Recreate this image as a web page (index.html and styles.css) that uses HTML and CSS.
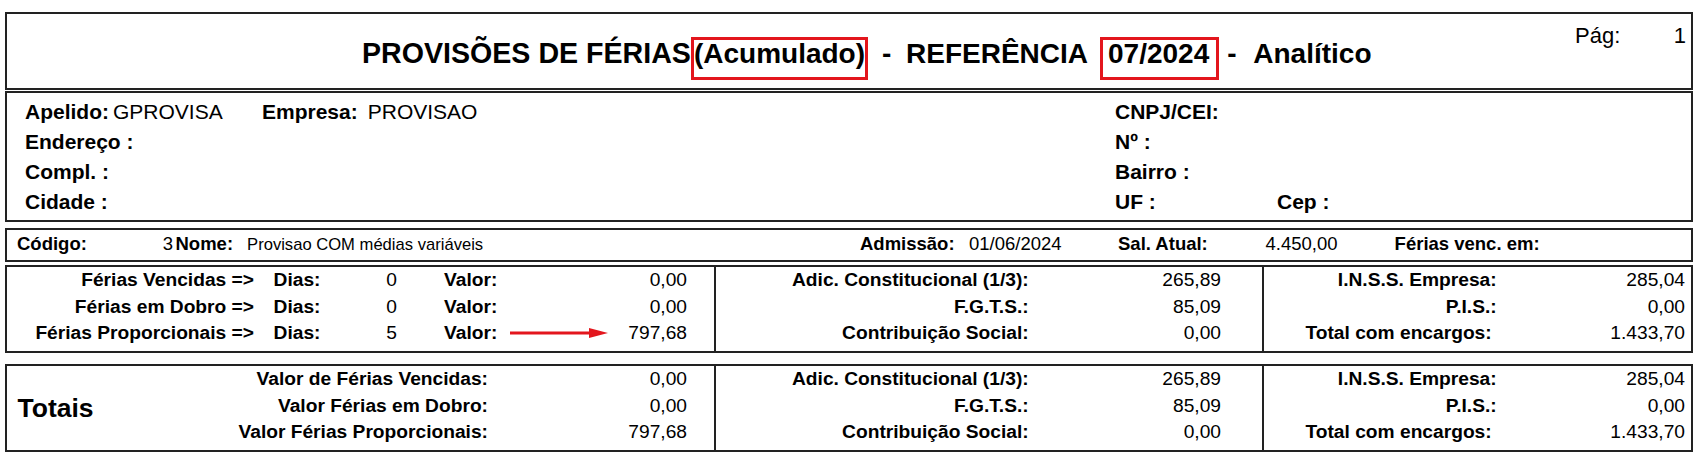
FILE: index.html
```html
<!DOCTYPE html>
<html lang="pt-BR">
<head>
<meta charset="utf-8">
<title>Provisões de Férias</title>
<link rel="stylesheet" href="styles.css">
</head>
<body>
<div class="page">
  <header class="box head">
    <h1 class="title">
      <span class="t-main">PROVISÕES DE FÉRIAS</span>
      <span class="mark mark-acum">(Acumulado)</span>
      <span class="dash dash-1">-</span>
      <span class="t-ref">REFERÊNCIA</span>
      <span class="mark mark-ref">07/2024</span>
      <span class="dash dash-2">-</span>
      <span class="t-kind">Analítico</span>
    </h1>
    <div class="pag"><span>Pág:</span><span>1</span></div>
  </header>

  <section class="box info">
    <div class="info-col">
      <div class="row"><span class="f-apelido"><span class="lb">Apelido:</span><span class="v-apelido">GPROVISA</span></span><span class="lb">Empresa:</span><span class="v-empresa">PROVISAO</span></div>
      <div class="row"><span class="lb">Endereço :</span></div>
      <div class="row"><span class="lb">Compl. :</span></div>
      <div class="row"><span class="lb">Cidade :</span></div>
    </div>
    <div class="info-col">
      <div class="row"><span class="lb">CNPJ/CEI:</span></div>
      <div class="row"><span class="lb">Nº :</span></div>
      <div class="row"><span class="lb">Bairro :</span></div>
      <div class="row"><span class="lb uf">UF :</span><span class="lb">Cep :</span></div>
    </div>
  </section>

  <section class="box emp">
    <div class="c-cod"><span class="lb">Código:</span><span>3</span></div>
    <div class="c-nome"><span class="lb">Nome:</span><span class="v-nome">Provisao COM médias variáveis</span></div>
    <div class="c-adm"><span class="lb">Admissão:</span><span class="v-adm">01/06/2024</span></div>
    <div class="c-sal"><span class="lb w-sal">Sal. Atual:</span><span>4.450,00</span></div>
    <div class="c-venc"><span class="lb">Férias venc. em:</span></div>
  </section>

  <section class="box calc calc-main">
    <div class="sec sec-1">
      <div class="r1"><span class="lb l-ferias">Férias Vencidas =&gt;</span><span class="p-dias"><span class="lb">Dias:</span><span>0</span></span><span class="p-valor"><span class="lb">Valor:</span><span class="num">0,00</span></span></div>
      <div class="r1"><span class="lb l-ferias">Férias em Dobro =&gt;</span><span class="p-dias"><span class="lb">Dias:</span><span>0</span></span><span class="p-valor"><span class="lb">Valor:</span><span class="num">0,00</span></span></div>
      <div class="r1"><span class="lb l-ferias">Férias Proporcionais =&gt;</span><span class="p-dias"><span class="lb">Dias:</span><span>5</span></span><span class="p-valor"><span class="lb">Valor:</span><svg class="arrow" width="98" height="12" viewBox="0 0 98 12"><line x1="0" y1="6" x2="82" y2="6" stroke="#e3161d" stroke-width="3"/><polygon points="79,1 98,6 79,11" fill="#e3161d"/></svg><span class="num">797,68</span></span></div>
    </div>
    <div class="sec sec-2">
      <div class="r2"><span class="lb l2">Adic. Constitucional (1/3):</span><span class="v2">265,89</span></div>
      <div class="r2"><span class="lb l2">F.G.T.S.:</span><span class="v2">85,09</span></div>
      <div class="r2"><span class="lb l2">Contribuição Social:</span><span class="v2">0,00</span></div>
    </div>
    <div class="sec sec-3">
      <div class="r3"><span class="lb l3">I.N.S.S. Empresa:</span><span class="v3">285,04</span></div>
      <div class="r3"><span class="lb l3">P.I.S.:</span><span class="v3">0,00</span></div>
      <div class="r3"><span class="lb l3 l3-total">Total com encargos:</span><span class="v3">1.433,70</span></div>
    </div>
  </section>

  <section class="box calc totals">
    <div class="sec sec-1 tot">
      <div class="tot-title">Totais</div>
      <div class="tot-rows">
        <div class="rt"><span class="lb lt">Valor de Férias Vencidas:</span><span class="vt">0,00</span></div>
        <div class="rt"><span class="lb lt">Valor Férias em Dobro:</span><span class="vt">0,00</span></div>
        <div class="rt"><span class="lb lt">Valor Férias Proporcionais:</span><span class="vt">797,68</span></div>
      </div>
    </div>
    <div class="sec sec-2">
      <div class="r2"><span class="lb l2">Adic. Constitucional (1/3):</span><span class="v2">265,89</span></div>
      <div class="r2"><span class="lb l2">F.G.T.S.:</span><span class="v2">85,09</span></div>
      <div class="r2"><span class="lb l2">Contribuição Social:</span><span class="v2">0,00</span></div>
    </div>
    <div class="sec sec-3">
      <div class="r3"><span class="lb l3">I.N.S.S. Empresa:</span><span class="v3">285,04</span></div>
      <div class="r3"><span class="lb l3">P.I.S.:</span><span class="v3">0,00</span></div>
      <div class="r3"><span class="lb l3 l3-total">Total com encargos:</span><span class="v3">1.433,70</span></div>
    </div>
  </section>
</div>
</body>
</html>
```

FILE: styles.css
```css
* { box-sizing: border-box; }

body {
  margin: 0;
  background: #fff;
  color: #000;
  font-family: "Liberation Sans", Arial, sans-serif;
}

.page {
  padding: 12px 10px 0 5px;
}

.box {
  border: 2px solid #222;
}

.lb { font-weight: bold; }

/* ---------- header ---------- */
.head {
  display: flex;
  align-items: flex-start;
  height: 78px;
}

.title {
  margin: 23px 0 0 355px;
  display: flex;
  align-items: baseline;
  font-size: 28px;
  line-height: 28px;
  font-weight: bold;
  white-space: nowrap;
}

.t-main { font-size: 28.6px; }

.mark {
  border: 3px solid #e3161d;
  padding: 0 0 9px 0;
}

.mark-acum { margin-left: 0; }
.dash-1 { margin-left: 14px; }
.t-ref { margin-left: 14.7px; }
.mark-ref { margin-left: 12px; padding: 0 7px 9px 5px; }
.dash-2 { margin-left: 8px; }
.t-kind { margin-left: 16.7px; }

.pag {
  margin: 10.5px 5px 0 auto;
  width: 111px;
  display: flex;
  justify-content: space-between;
  font-size: 22px;
  line-height: 22px;
}

/* ---------- company info ---------- */
.info {
  margin-top: 1px;
  display: grid;
  grid-template-columns: 1090px 1fr;
  padding: 4px 0 3px 18px;
  font-size: 21px;
  line-height: 30px;
}

.row { white-space: nowrap; }

.f-apelido { display: inline-block; width: 237px; }
.v-apelido { margin-left: 4px; }
.v-empresa { margin-left: 10px; }
.uf { display: inline-block; width: 162px; }

/* ---------- employee row ---------- */
.emp {
  margin-top: 6px;
  display: grid;
  grid-template-columns: 156px 687px 258px 276.6px 1fr;
  padding: 0 0 1px 10px;
  font-size: 18.5px;
  line-height: 28px;
  white-space: nowrap;
}

.c-cod { display: flex; justify-content: space-between; }
.c-nome .lb { margin-left: 2.5px; }
.v-nome { margin-left: 14px; font-size: 16.6px; }
.v-adm { margin-left: 14.4px; }
.w-sal { display: inline-block; width: 147.5px; }

/* ---------- calculation boxes ---------- */
.calc {
  display: flex;
  font-size: 19.2px;
  line-height: 26.5px;
  white-space: nowrap;
}

.calc-main { margin-top: 3px; }
.totals { margin-top: 11px; }

.sec { padding-bottom: 4.5px; }
.sec-1 { width: 707px; }
.sec-2 { width: 548px; border-left: 2px solid #222; }
.sec-3 { flex: 1; border-left: 2px solid #222; }

.r1 { display: flex; align-items: center; }
.l-ferias { width: 247px; text-align: right; }
.p-dias {
  margin-left: 19.6px;
  width: 123.4px;
  display: flex;
  justify-content: space-between;
}
.p-valor {
  margin-left: 47px;
  width: 243px;
  display: flex;
  align-items: center;
}
.p-valor .num { margin-left: auto; }
.arrow { display: block; margin-left: 13px; }

.r2, .r3, .rt { display: flex; }
.l2 { width: 312.7px; text-align: right; }
.v2 { width: 192.3px; text-align: right; }
.l3 { width: 232.7px; text-align: right; }
.l3-total { padding-right: 5px; }
.v3 { width: 188.3px; text-align: right; }

.tot { display: flex; }
.tot-title {
  width: 193px;
  padding: 5px 0 0 10.5px;
  align-self: center;
  font-size: 26.5px;
  line-height: 30px;
  font-weight: bold;
}
.lt { width: 288px; text-align: right; }
.vt { width: 199px; text-align: right; }
```
